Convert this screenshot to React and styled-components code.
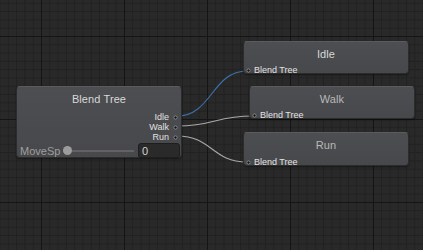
import React from 'react';
import styled, {createGlobalStyle} from 'styled-components';

const GlobalStyle = createGlobalStyle`
  html, body {
    margin: 0;
    padding: 0;
    background: #262626;
  }
  body {
    font-family: "Liberation Sans", Arial, sans-serif;
  }
`;

const Canvas = styled.div`
  position: relative;
  width: 423px;
  height: 250px;
  overflow: hidden;
  background-color: #292929;
  background-image:
    linear-gradient(to right, #151515 0 1px, transparent 1px),
    linear-gradient(to bottom, #151515 0 1px, transparent 1px),
    linear-gradient(to right, #212121 0 1px, transparent 1px),
    linear-gradient(to bottom, #212121 0 1px, transparent 1px);
  background-size: 83px 83px, 83px 83px, 8.3px 8.3px, 8.3px 8.3px;
  background-position: 41px 0, 0 36px, 41px 0, 0 36px;
`;

const Wires = styled.svg`
  position: absolute;
  left: 0;
  top: 0;
  pointer-events: none;
`;

const Node = styled.div`
  position: absolute;
  left: ${p => p.x}px;
  top: ${p => p.y}px;
  width: ${p => p.w}px;
  height: ${p => p.h}px;
  box-sizing: border-box;
  display: flex;
  flex-direction: column;
  background: linear-gradient(#4d4e51, #47484b);
  border: 1px solid #2c2c2c;
  border-top-color: #5a5b5d;
  border-radius: 4px;
  box-shadow: 0 1px 2px rgba(0, 0, 0, 0.45);
  color: #d4d4d4;
`;

const Title = styled.div`
  font-size: 11px;
  line-height: 13px;
  text-align: center;
  padding-top: ${p => p.pad}px;
  color: ${p => p.dim ? '#b9b9b9' : '#d8d8d8'};
  letter-spacing: 0.1px;
`;

const Outputs = styled.div`
  display: flex;
  flex-direction: column;
  align-items: flex-end;
  margin-top: 6px;
  padding-right: 3px;
`;

const Port = styled.div`
  display: flex;
  align-items: center;
  gap: 4px;
  height: 10px;
  font-size: 9px;
  color: #e2e2e2;
  flex-direction: ${p => p.input ? 'row' : 'row-reverse'};
`;

const Dot = styled.span`
  width: 3px;
  height: 3px;
  border-radius: 50%;
  background: #111;
  border: 1px solid #9a9a9a;
  box-sizing: content-box;
  transform: scale(0.8);
`;

const Input = styled(Port)`
  margin-top: auto;
  margin-bottom: -2px;
  padding-left: 2px;
  gap: 3px;
`;

const ParamRow = styled.div`
  display: flex;
  align-items: center;
  margin-top: 1px;
  padding: 0 1px 0 3px;
`;

const ParamLabel = styled.span`
  font-size: 11px;
  color: #9e9e9e;
  width: 46px;
`;

const Slider = styled.div`
  position: relative;
  flex: 1;
  height: 2px;
  background: #626262;
  margin-right: 4px;
`;

const Knob = styled.span`
  position: absolute;
  left: -3px;
  top: -4px;
  width: 9px;
  height: 9px;
  border-radius: 50%;
  background: #9c9c9c;
`;

const Field = styled.div`
  width: 42px;
  height: 15px;
  box-sizing: border-box;
  background: #2a2a2a;
  border: 1px solid #1e1e1e;
  border-radius: 3px;
  font-size: 11px;
  color: #d0d0d0;
  padding: 1px 0 0 3px;
  line-height: 12px;
`;

const StateNode = ({x, y, name, dim, h = 33}) => (
  <Node x={x} y={y} w={166} h={h}>
    <Title pad={6} dim={dim}>{name}</Title>
    <Input input>
      <Dot/>
      <span>Blend Tree</span>
    </Input>
  </Node>
);

const App = () => (
  <Canvas>
    <GlobalStyle/>
    <Wires width="423" height="250">
      <path d="M177 116 C 212 116, 212 71, 247 71" stroke="#3d6fa6" strokeWidth="1.2" fill="none"/>
      <path d="M177 126 C 215 126, 215 116, 253 116" stroke="#a9a9a9" strokeWidth="1.1" fill="none"/>
      <path d="M177 136 C 212 136, 212 162, 247 162" stroke="#a9a9a9" strokeWidth="1.1" fill="none"/>
    </Wires>

    <Node x={16} y={86} w={166} h={72}>
      <Title pad={6}>Blend Tree</Title>
      <Outputs>
        <Port><Dot/><span>Idle</span></Port>
        <Port><Dot/><span>Walk</span></Port>
        <Port><Dot/><span>Run</span></Port>
      </Outputs>
      <ParamRow>
        <ParamLabel>MoveSp</ParamLabel>
        <Slider><Knob/></Slider>
        <Field>0</Field>
      </ParamRow>
    </Node>

    <StateNode x={243} y={41} name="Idle"/>
    <StateNode x={249} y={86} name="Walk" dim/>
    <StateNode x={243} y={132} name="Run" dim h={34}/>
  </Canvas>
);

export default App;
